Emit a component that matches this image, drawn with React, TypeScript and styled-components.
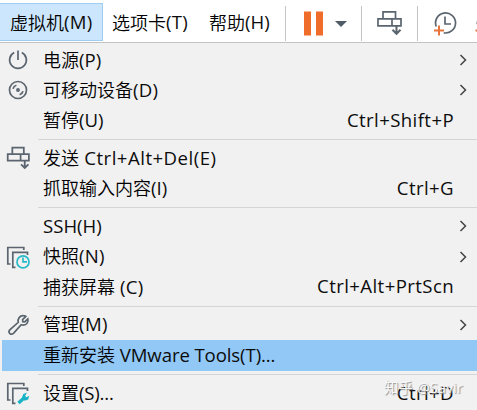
import React from 'react';
import styled, { createGlobalStyle } from 'styled-components';

const GlobalStyle = createGlobalStyle`
  * { box-sizing: border-box; }
  html, body { margin: 0; height: 410px; overflow: hidden; background: #f1f1f1; }
`;

const Window = styled.div`
  position: relative;
  width: 477px;
  height: 410px;
  overflow: hidden;
  display: flex;
  flex-direction: column;
  background: #f1f1f1;
  color: #0c0c0c;
  font-family: 'Open Sans', 'Noto Sans CJK SC', sans-serif;
  font-size: 18px;
  line-height: 24px;
  white-space: nowrap;
`;

const MenuBar = styled.div`
  display: flex;
  flex: none;
  height: 43px;
  padding-top: 3px;
  background: #fff;
  border-bottom: 1px solid #c3c3c3;
`;

const MenuTitle = styled.div<{ $width: number; $active?: boolean }>`
  flex: none;
  display: flex;
  align-items: center;
  width: ${p => p.$width}px;
  height: 38px;
  padding: 0 0 0 ${p => (p.$active ? 10 : 9)}px;
  border: 1px solid ${p => (p.$active ? '#9fcdf0' : 'transparent')};
  border-left: 0;
  background: ${p => (p.$active ? '#cce6fd' : 'transparent')};
`;

const Toolbar = styled.div`
  display: flex;
  flex: none;
  height: 35px;
  margin-top: 3px;
`;

const ToolGroup = styled.div<{ $width: number }>`
  flex: none;
  width: ${p => p.$width}px;
  border-left: 1px solid #c4c4c4;
`;

const Icon = styled.svg`
  display: block;
  fill: none;
  stroke: #5b656f;
  stroke-width: 1.7;
`;

const Menu = styled.div`
  display: flex;
  flex-direction: column;
  flex: none;
  padding: 2px 0 0 2px;
`;

const Row = styled.div<{ $active?: boolean }>`
  display: grid;
  grid-template-columns: 41px 1fr auto;
  align-items: center;
  height: ${p => (p.$active ? 31 : 30.25)}px;
  padding-right: 10px;
  background: ${p => (p.$active ? '#92c8f6' : 'transparent')};
`;

const IconCell = styled.div`
  padding-left: 4px;
`;

const Label = styled.span`
  padding-bottom: 1.5px;
`;

const Tail = styled.span<{ $spacing?: number }>`
  font-size: 18.6px;
  letter-spacing: ${p => p.$spacing ?? 0}px;
  white-space: pre;
`;

const Shortcut = styled.span`
  margin-right: 13px;
  padding-bottom: 1.5px;
  font-size: 18.6px;
  letter-spacing: 0.4px;
`;

const Separator = styled.div`
  height: 7.5px;
  margin-left: 36px;
  padding-top: 3.5px;

  &::before {
    content: '';
    display: block;
    height: 1px;
    background: #d5d5d5;
  }
`;

const Cjk = styled.span`
  font-family: 'Noto Sans CJK SC', sans-serif;
  font-weight: 350;
  color: #000;
`;

const Watermark = styled.div`
  position: absolute;
  left: 384px;
  top: 376px;
  font-size: 14.5px;
  color: #f8f8f8;
  text-shadow: 1px 1px 1px #8d8d8d;
`;

const SendGlyph = () => (
  <>
    <path d="M6 1h12.5v7H6zM1 8h23v7H1zM15 8v7" />
    <path d="M19.5 15v8M15.5 19l4 4 4-4" strokeWidth="2" />
  </>
);

const Frames = () => <path d="M4.5 19H1.8V2.5h16V5M9.5 22.3H6.8V7.3h14.7V10" />;

const icons = {
  power: <path d="M8.2 4.5a8.4 8.4 0 1 0 7.6 0M12 2.5V12" />,
  disc: (
    <>
      <circle cx="12" cy="12" r="8.5" />
      <circle cx="12" cy="12" r="1.1" />
      <path d="M7 10.7a5 5 0 0 1 3.4-3.5M17 13.3a5 5 0 0 1-3.4 3.5" />
    </>
  ),
  send: <g transform="translate(.8 .8) scale(.92)" strokeWidth="1.9"><SendGlyph /></g>,
  snapshot: (
    <>
      <Frames />
      <circle cx="17" cy="16.9" r="6" stroke="#28b9c8" fill="#f1f1f1" />
      <path d="M17 12.6v4.3h4" stroke="#28b9c8" />
    </>
  ),
  wrench: (
    <path d="M19.8 3.4l-3.2 3.2.2 2 2 .2 3-3c.9 3.2-1.2 6.2-4.4 6.3-1 0-1.5-.2-2.2-.4l-7.5 8.4c-2.7 2.7-6.2-.4-3.9-3.2l8.5-7.6c-1-3.3 1.5-7 5.3-6.6.8 0 1.6.2 2.2.7z" />
  ),
  settings: (
    <>
      <Frames />
      <path d="M12.5 22l5.5-5" stroke="#18b3c6" strokeWidth="3.4" />
      <path d="M21 11.4l-3.7 1.6-1.4 3.8 2.9 2.9 3.4-1.2 1.1-3.8-2.8 1.6-1.4-1.4z" fill="#18b3c6" stroke="none" />
    </>
  ),
};

type Item = {
  icon?: keyof typeof icons;
  cjk?: string;
  tail: string;
  spacing?: number;
  keys?: string;
  sub?: boolean;
  active?: boolean;
};

const groups: Item[][] = [
  [
    { icon: 'power', cjk: '电源', tail: '(P)', sub: true },
    { icon: 'disc', cjk: '可移动设备', tail: '(D)', spacing: 0.3, sub: true },
    { cjk: '暂停', tail: '(U)', keys: 'Ctrl+Shift+P' },
  ],
  [
    { icon: 'send', cjk: '发送', tail: ' Ctrl+Alt+Del(E)', spacing: 0.48 },
    { cjk: '抓取输入内容', tail: '(I)', keys: 'Ctrl+G' },
  ],
  [
    { tail: 'SSH(H)', sub: true },
    { icon: 'snapshot', cjk: '快照', tail: '(N)', spacing: 0.2, sub: true },
    { cjk: '捕获屏幕', tail: ' (C)', spacing: 0.2, keys: 'Ctrl+Alt+PrtScn' },
  ],
  [
    { icon: 'wrench', cjk: '管理', tail: '(M)', spacing: 0.4, sub: true },
    { cjk: '重新安装', tail: ' VMware Tools(T)...', spacing: -0.1, active: true },
  ],
  [{ icon: 'settings', cjk: '设置', tail: '(S)...', spacing: -0.2, keys: 'Ctrl+D' }],
];

const MenuRow = ({ item }: { item: Item }) => (
  <Row $active={item.active}>
    <IconCell>
      {item.icon && <Icon width="24" height="24" viewBox="0 0 24 24">{icons[item.icon]}</Icon>}
    </IconCell>
    <Label>
      {item.cjk && <Cjk>{item.cjk}</Cjk>}
      <Tail $spacing={item.spacing}>{item.tail}</Tail>
    </Label>
    {item.keys && <Shortcut>{item.keys}</Shortcut>}
    {item.sub && (
      <Icon width="8" height="12" viewBox="0 0 8 12">
        <path d="M1.5 1l5 5-5 5" stroke="#444" strokeWidth="1.5" />
      </Icon>
    )}
  </Row>
);

export default function App() {
  return (
    <Window>
      <GlobalStyle />
      <MenuBar>
        <MenuTitle $width={103} $active><Cjk>虚拟机</Cjk><Tail $spacing={0.3}>(M)</Tail></MenuTitle>
        <MenuTitle $width={97}><Cjk>选项卡</Cjk><Tail $spacing={0.3}>(T)</Tail></MenuTitle>
        <MenuTitle $width={85}><Cjk>帮助</Cjk><Tail>(H)</Tail></MenuTitle>
        <Toolbar>
          <ToolGroup $width={76}>
            <Icon width="75" height="35" viewBox="286 6 75 35">
              <path d="M304 11.5h7v24h-7zM316 11.5h7v24h-7z" fill="#ef6c2b" stroke="none" />
              <path d="M335 21h12l-6 6z" fill="#4f5b66" stroke="none" />
            </Icon>
          </ToolGroup>
          <ToolGroup $width={56}>
            <Icon width="55" height="35" viewBox="362 6 55 35">
              <g transform="translate(377 10.8)"><SendGlyph /></g>
            </Icon>
          </ToolGroup>
          <ToolGroup $width={60}>
            <Icon width="59" height="35" viewBox="418 6 59 35">
              <path d="M436.2 26.5a10 10 0 1 1 7.5 6.3M445 16.5V24h6" />
              <path d="M439 25.5v10M434 30.5h10" stroke="#e8743b" strokeWidth="2" />
              <path d="M475.5 30.5h3" stroke="#e8743b" strokeWidth="2" />
              <path d="M478 20l-1.5 4" stroke="#aeb4ba" />
            </Icon>
          </ToolGroup>
        </Toolbar>
      </MenuBar>
      <Menu>
        {groups.map((group, g) => (
          <React.Fragment key={g}>
            {g > 0 && <Separator />}
            {group.map(item => <MenuRow key={item.tail} item={item} />)}
          </React.Fragment>
        ))}
      </Menu>
      <Watermark>知乎 @Savir</Watermark>
    </Window>
  );
}
